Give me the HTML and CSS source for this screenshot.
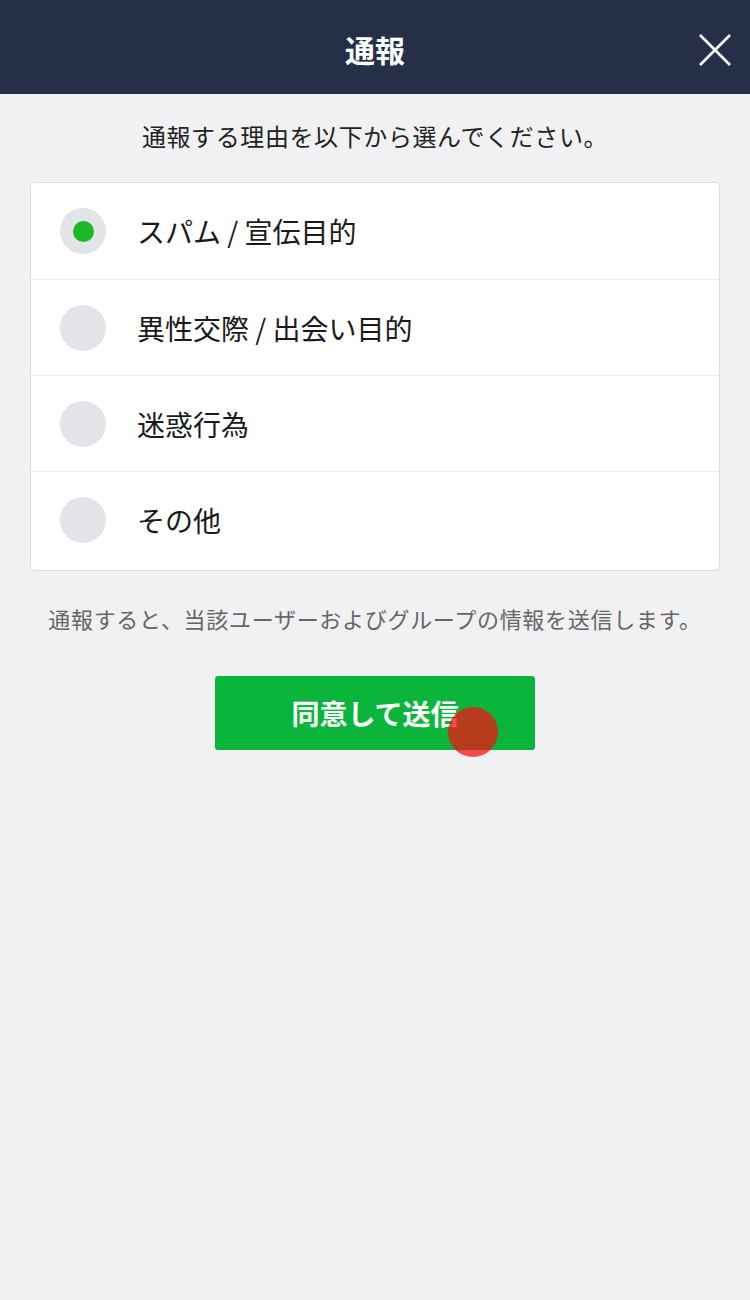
FILE: index.html
```html
<!DOCTYPE html>
<html lang="ja">
<head>
<meta charset="utf-8">
<title>通報</title>
<link rel="stylesheet" href="styles.css">
</head>
<body>
<header class="bar">
  <h1 class="title">通報</h1>
  <button class="close" aria-label="閉じる">
    <svg width="32" height="32" viewBox="0 0 32 32"><path d="M1 1 L31 31 M31 1 L1 31" stroke="#fff" stroke-width="2.6" fill="none"/></svg>
  </button>
</header>
<main class="content">
  <p class="lead">通報する理由を以下から選んでください。</p>
  <ul class="card">
    <li class="row"><span class="radio on"><span class="dot"></span></span><span class="label">スパム / 宣伝目的</span></li>
    <li class="row"><span class="radio"></span><span class="label">異性交際 / 出会い目的</span></li>
    <li class="row"><span class="radio"></span><span class="label">迷惑行為</span></li>
    <li class="row"><span class="radio"></span><span class="label">その他</span></li>
  </ul>
  <p class="note">通報すると、当該ユーザーおよびグループの情報を送信します。</p>
  <div class="actions">
    <button class="submit">同意して送信<span class="tap"></span></button>
  </div>
</main>
</body>
</html>
```
FILE: styles.css
```css
* { box-sizing: border-box; }
html, body { margin: 0; padding: 0; }
body {
  background: #f1f1f3;
  font-family: "Noto Sans CJK JP", "Noto Sans", sans-serif;
  color: #1e1e1e;
  width: 750px;
  min-height: 1300px;
}
.bar {
  height: 94px;
  background: #252f48;
  display: flex;
  align-items: center;
  justify-content: center;
  position: relative;
}
.title {
  margin: 0;
  color: #fff;
  font-size: 30px;
  font-weight: 700;
  line-height: 1;
  margin-top: 4px;
}
.close {
  position: absolute;
  right: 19px;
  top: 34px;
  width: 32px;
  height: 32px;
  padding: 0;
  border: 0;
  background: none;
  display: block;
}
.close svg { display: block; }
.content {
  padding: 0 30px;
}
.lead {
  margin: 0;
  padding-top: 26px;
  height: 88px;
  text-align: center;
  font-size: 24px;
  line-height: 32px;
  letter-spacing: 0.6px;
  color: #222;
}
.card {
  list-style: none;
  margin: 0;
  padding: 0;
  background: #fff;
  border: 1px solid #dcdcde;
  border-radius: 4px;
}
.row {
  height: 96px;
  display: flex;
  align-items: center;
  padding-left: 29px;
  border-top: 1px solid #efeff0;
}
.row:first-child { border-top: 0; }
.row:last-child { height: 99px; padding-bottom: 3px; }
.radio {
  width: 46px;
  height: 46px;
  border-radius: 50%;
  background: #e3e4e7;
  display: flex;
  align-items: center;
  justify-content: center;
  flex: none;
}
.dot {
  width: 21px;
  height: 21px;
  border-radius: 50%;
  background: #1db924;
}
.label {
  margin-left: 31px;
  font-size: 28px;
  line-height: 1;
  color: #1a1a1a;
}
.note {
  margin: 0;
  padding-top: 32px;
  height: 105px;
  text-align: center;
  font-size: 22px;
  line-height: 30px;
  letter-spacing: 0.7px;
  color: #666;
}
.actions {
  display: flex;
  justify-content: center;
}
.submit {
  position: relative;
  width: 320px;
  height: 74px;
  border: 0;
  border-radius: 3px;
  background: #0bb53b;
  color: #fff;
  font-family: inherit;
  font-size: 28px;
  font-weight: 700;
  padding: 0;
}
.tap {
  position: absolute;
  left: 233px;
  top: 31px;
  width: 50px;
  height: 50px;
  border-radius: 50%;
  background: rgba(240, 20, 20, 0.75);
}
```
